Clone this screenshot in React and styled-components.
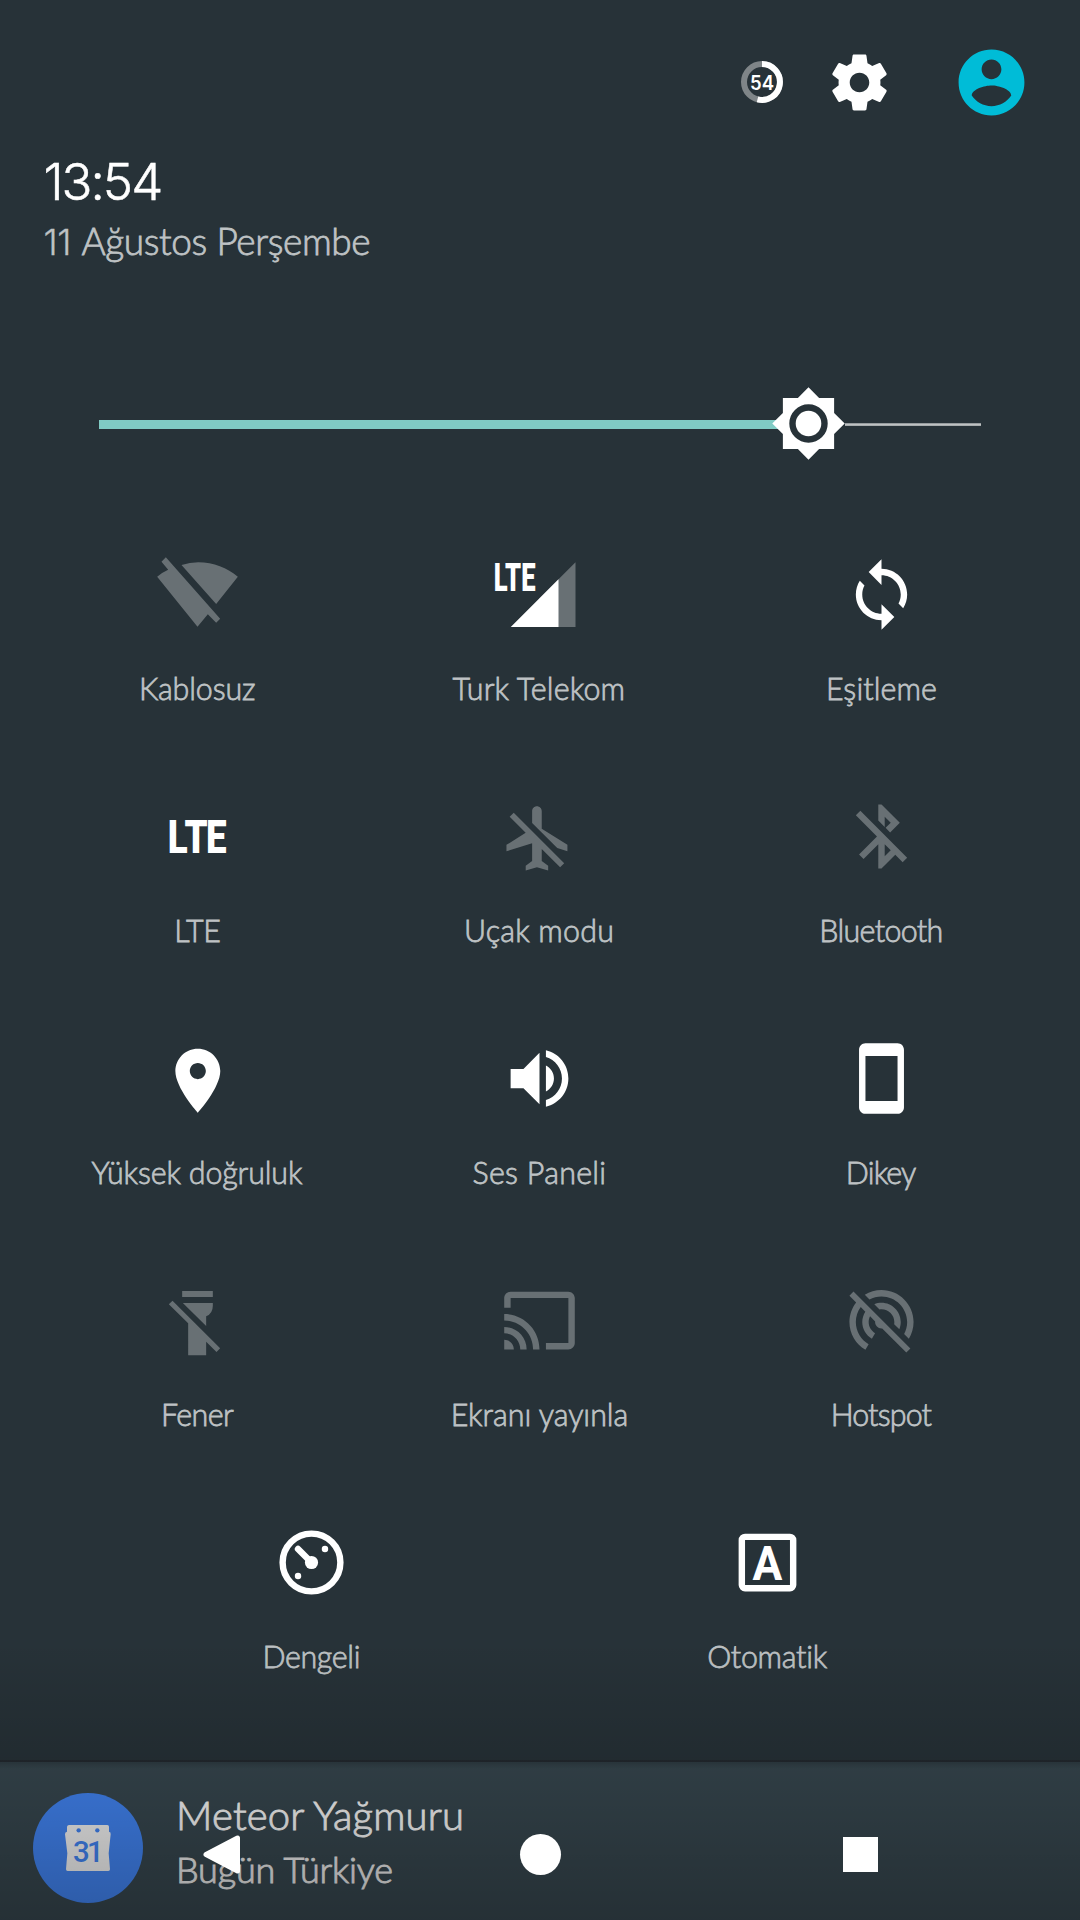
import React from "react";
import styled, { createGlobalStyle } from "styled-components";

const GlobalStyle = createGlobalStyle`
  * {
    box-sizing: border-box;
  }

  body {
    margin: 0;
    background: #273238;
  }

  svg {
    display: block;
    flex: none;
    overflow: visible;
  }
`;

const Screen = styled.div`
  position: relative;
  display: flex;
  flex-direction: column;
  width: 1080px;
  height: 1920px;
  overflow: hidden;
  background: #37474f;
  font-family: "Lato", "Noto Sans", sans-serif;
  font-weight: 300;
`;

const Panel = styled.section`
  display: flex;
  flex-direction: column;
  height: 1762px;
  background: #273238;
  border-bottom: 2px solid #23292f;
`;

const Toolbar = styled.header`
  display: flex;
  align-items: center;
  justify-content: flex-end;
  height: 150px;
  padding: 14px 49px 0 0;
`;

const SettingsButton = styled.div`
  margin: 0 59px 0 43px;
`;

const Text = styled.div`
  color: ${(p) => p.$color || "#bec2c4"};
  font-size: ${(p) => p.$size}px;
  line-height: ${(p) => p.$line}px;
  letter-spacing: ${(p) => p.$tracking || 0}px;
  -webkit-text-stroke: ${(p) => p.$stroke || 0.8}px currentColor;
  white-space: nowrap;
`;

const TileLabel = styled(Text)`
  transform: scaleX(0.95);
`;

const Time = styled(Text)`
  padding-top: 2px;
  font-family: "Inter", sans-serif;
`;

const DayNumber = styled.span`
  margin-right: 2px;
  font-family: "Inter", sans-serif;
  font-size: 36px;
  line-height: 1;
  -webkit-text-stroke-width: 0.3px;
`;

const Clock = styled.div`
  display: flex;
  flex-direction: column;
  gap: 7px;
  height: 113px;
  padding-left: 43.5px;
`;

const Slider = styled.div`
  display: flex;
  align-items: center;
  height: 75px;
  margin-top: 124px;
  padding: 0 99px;
`;

const SliderFill = styled.div`
  width: 679px;
  height: 9px;
  background: #80cbc4;
`;

const SliderRest = styled.div`
  flex: 1;
  height: 3px;
  background: linear-gradient(#747b7f, #c5c8c9 40%, #9da2a4);
`;

const SliderThumb = styled.div`
  margin: 0 0 2px -6px;
`;

const Tiles = styled.div`
  display: grid;
  grid-template-columns: repeat(${(p) => p.$columns}, 1fr);
  grid-auto-rows: 242px;
  margin-top: ${(p) => p.$top || 0}px;
  padding: 0 ${(p) => p.$inset + 2}px 0 ${(p) => p.$inset}px;
`;

const TileBox = styled.div`
  display: flex;
  flex-direction: column;
  align-items: center;
  gap: 35px;
  padding-top: 40px;
`;

const Notification = styled.section`
  display: flex;
  flex: 1;
  gap: 33px;
  padding: 28px 33px 0;
  background: linear-gradient(rgba(0, 0, 0, 0.16), rgba(0, 0, 0, 0) 7px);
`;

const AppBadge = styled.div`
  display: flex;
  align-items: center;
  justify-content: center;
  width: 110px;
  height: 110px;
  margin-top: 3px;
  border-radius: 50%;
  background: #4285f4;
`;

const NotificationText = styled.div`
  display: flex;
  flex-direction: column;
  gap: 8px;
  padding-top: 1px;
`;

const Scrim = styled.div`
  position: absolute;
  left: 0;
  right: 0;
  bottom: 0;
  height: 280px;
  background: linear-gradient(rgba(0, 0, 0, 0), rgba(0, 0, 0, 0.32));
`;

const NavBar = styled.nav`
  position: absolute;
  left: 0;
  right: 0;
  bottom: 0;
  display: grid;
  grid-template-columns: repeat(3, 1fr);
  place-items: center;
  height: 132px;
  padding: 0 60px;
`;

const BackKey = styled.div`
  padding-left: 2px;
`;

const HomeKey = styled.div`
  width: 41px;
  height: 41px;
  border-radius: 50%;
  background: #fff;
`;

const RecentsKey = styled.div`
  width: 35px;
  height: 35px;
  background: #fff;
`;

const ON = "#fff";
const OFF = "#687074";

function Icon({ d, size = 77, color = ON, box = "0 0 24 24", children }) {
  return (
    <svg width={size} height={size} viewBox={box} fill={color}>
      {d && <path d={d} />}
      {children}
    </svg>
  );
}

const paths = {
  settings:
    "M19.43 12.98c.04-.32.07-.64.07-.98s-.03-.66-.07-.98l2.11-1.65c.19-.15.24-.42.12-.64l-2-3.46c-.12-.22-.39-.3-.61-.22l-2.49 1c-.52-.4-1.08-.73-1.69-.98l-.38-2.65C14.46 2.18 14.25 2 14 2h-4c-.25 0-.46.18-.49.42l-.38 2.65c-.61.25-1.17.59-1.69.98l-2.49-1c-.23-.09-.49 0-.61.22l-2 3.46c-.13.22-.07.49.12.64l2.11 1.65c-.04.32-.07.65-.07.98s.03.66.07.98l-2.11 1.65c-.19.15-.24.42-.12.64l2 3.46c.12.22.39.3.61.22l2.49-1c.52.4 1.08.73 1.69.98l.38 2.65c.03.24.24.42.49.42h4c.25 0 .46-.18.49-.42l.38-2.65c.61-.25 1.17-.59 1.69-.98l2.49 1c.23.09.49 0 .61-.22l2-3.46c.12-.22.07-.49-.12-.64l-2.11-1.65zM12 15.5c-1.93 0-3.5-1.57-3.5-3.5s1.57-3.5 3.5-3.5 3.5 1.57 3.5 3.5-1.57 3.5-3.5 3.5z",
  account:
    "M12 2C6.48 2 2 6.48 2 12s4.48 10 10 10 10-4.48 10-10S17.52 2 12 2zm0 3c1.66 0 3 1.34 3 3s-1.34 3-3 3-3-1.34-3-3 1.34-3 3-3zm0 14.2c-2.5 0-4.71-1.28-6-3.22.03-1.99 4-3.08 6-3.08 1.99 0 5.97 1.09 6 3.08-1.29 1.94-3.5 3.22-6 3.22z",
  sync:
    "M12 4V1L8 5l4 4V6c3.31 0 6 2.69 6 6 0 1.01-.25 1.97-.7 2.8l1.46 1.46C19.54 15.03 20 13.57 20 12c0-4.42-3.58-8-8-8zm0 14c-3.31 0-6-2.69-6-6 0-1.01.25-1.97.7-2.8L5.24 7.74C4.46 8.97 4 10.43 4 12c0 4.42 3.58 8 8 8v3l4-4-4-4v3z",
  airplane:
    "M13 9V3.5c0-.83-.67-1.5-1.5-1.5S10 2.67 10 3.5v3.68l7.83 7.83L21 16v-2l-8-5zM3 5.27l4.99 4.99L2 14v2l8-2.5V19l-2 1.5V22l3.5-1 3.5 1v-1.5L13 19v-3.73L18.73 21 20 19.73 4.27 4 3 5.27z",
  bluetooth:
    "M13 5.83l1.88 1.88-1.6 1.6 1.41 1.41 3.02-3.02L12 2h-1v5.03l2 2v-3.2zM5.41 4L4 5.41 10.59 12 5 17.59 6.41 19 11 14.41V22h1l4.29-4.29 2.3 2.29L20 18.59 5.41 4zM13 18.17v-3.76l1.88 1.88L13 18.17z",
  location:
    "M12 2C8.13 2 5 5.13 5 9c0 5.25 7 13 7 13s7-7.75 7-13c0-3.87-3.13-7-7-7zm0 9.5c-1.38 0-2.5-1.12-2.5-2.5s1.12-2.5 2.5-2.5 2.5 1.12 2.5 2.5-1.12 2.5-2.5 2.5z",
  volume:
    "M3 9v6h4l5 5V4L7 9H3zm13.5 3c0-1.77-1.02-3.29-2.5-4.03v8.05c1.48-.73 2.5-2.25 2.5-4.02zM14 3.23v2.06c2.89.86 5 3.54 5 6.71s-2.11 5.85-5 6.71v2.06c4.01-.91 7-4.49 7-8.77s-2.99-7.86-7-8.77z",
  portrait:
    "M17 1.01L7 1c-1.1 0-2 .9-2 2v18c0 1.1.9 2 2 2h10c1.1 0 2-.9 2-2V3c0-1.1-.9-1.99-2-1.99zM17 19H7V5h10v14z",
  cast:
    "M21 3H3c-1.1 0-2 .9-2 2v3h2V5h18v14h-7v2h7c1.1 0 2-.9 2-2V5c0-1.1-.9-2-2-2zM1 18v3h3c0-1.66-1.34-3-3-3zm0-4v2c2.76 0 5 2.24 5 5h2c0-3.87-3.13-7-7-7zm0-4v2c4.97 0 9 4.03 9 9h2c0-6.08-4.93-11-11-11z",
  hotspot:
    "M17.56 14.24c.28-.69.44-1.45.44-2.24 0-3.31-2.69-6-6-6-.79 0-1.55.16-2.24.44l1.62 1.62c.2-.03.41-.06.62-.06 2.21 0 4 1.79 4 4 0 .21-.02.42-.05.63l1.61 1.61zM12 4c4.42 0 8 3.58 8 8 0 1.35-.35 2.62-.95 3.74l1.47 1.47C21.46 15.69 22 13.91 22 12c0-5.52-4.48-10-10-10-1.91 0-3.69.55-5.21 1.47l1.46 1.46C9.37 4.34 10.65 4 12 4zM3.27 2.5L2 3.77l2.1 2.1C2.79 7.57 2 9.69 2 12c0 3.7 2.01 6.92 4.99 8.65l1-1.73C5.61 17.53 4 14.96 4 12c0-1.76.57-3.38 1.53-4.69l1.43 1.44C6.36 9.68 6 10.8 6 12c0 2.22 1.21 4.15 3 5.19l1-1.74c-1.19-.7-2-1.97-2-3.45 0-.65.17-1.25.44-1.79l1.58 1.58L10 12c0 1.1.9 2 2 2l.21-.02.01.01 7.51 7.51L21 20.23 4.27 3.5l-1-1z",
};

function BatteryIcon() {
  return (
    <svg width="42" height="42" viewBox="0 0 42 42" fill="none">
      <circle cx="21" cy="21" r="18" stroke="#7f8588" strokeWidth="6" />
      <path d="M21 3a18 18 0 1 1-4.5 35.45" stroke="#fff" strokeWidth="6" />
      <text
        x="21"
        y="28.5"
        fill="#fff"
        fontFamily="Inter, sans-serif"
        fontSize="20"
        fontWeight="600"
        textAnchor="middle"
        textLength="24"
        lengthAdjust="spacingAndGlyphs"
      >
        54
      </text>
    </svg>
  );
}

function BrightnessIcon() {
  return (
    <svg width="73" height="73" viewBox=".6 .6 22.8 22.8" fill="#fff">
      <path d="M20 8.69V4h-4.69L12 .69 8.69 4H4v4.69L.69 12 4 15.31V20h4.69L12 23.31 15.31 20H20v-4.69L23.31 12z" />
      <circle cx="12" cy="12" r="5" fill="none" stroke="#273238" strokeWidth="2" />
    </svg>
  );
}

function WifiOffIcon() {
  return (
    <Icon
      box="115.5 48 231 231"
      color={OFF}
      d="M183 75Q208 67 233 67C280 67 320 84 352 110L287 192zM110 110Q125 97 143 89L123 65 136 52 299 236 287 248 262 223 231 260z"
    />
  );
}

function SignalIcon() {
  return (
    <Icon box="1142.5 48 231 231">
      <path d="M1366 67V261H1172z" fill={OFF} />
      <path d="M1315 118V261H1172z" />
      <text
        x="1121"
        y="154"
        fontFamily="Roboto, sans-serif"
        fontSize="117"
        fontWeight="900"
        textLength="125"
        lengthAdjust="spacingAndGlyphs"
      >
        LTE
      </text>
    </Icon>
  );
}

function LteIcon() {
  return (
    <Icon>
      <text
        transform="scale(.8 1)"
        x="3.4 9.9 18.3"
        y="17.1"
        fontFamily="Roboto, sans-serif"
        fontSize="14.3"
        fontWeight="900"
      >
        LTE
      </text>
    </Icon>
  );
}

function TorchOffIcon() {
  return (
    <Icon
      box="116.5 36 231 231"
      color={OFF}
      d="M186 63H278V81H186zM188 99H278V107Q278 130 258 139V168zM146 103L157 92 300 235 289 246 258 215V256H204V160z"
    />
  );
}

function ProfileIcon() {
  return (
    <Icon>
      <g fill="none" stroke="#fff" strokeWidth="2" strokeLinecap="round">
        <circle cx="12" cy="12" r="9" />
        <path d="M7.8 7.8L12 12" />
      </g>
      <circle cx="12" cy="12" r="2.05" />
      <circle cx="16.2" cy="7.8" r="1" />
      <circle cx="7.8" cy="16.2" r="1" />
    </Icon>
  );
}

function AutoIcon() {
  return (
    <Icon>
      <rect x="4" y="4" width="16" height="16" rx="1" fill="none" stroke="#fff" strokeWidth="2" />
      <text
        x="12"
        y="17.3"
        fontFamily="Roboto, sans-serif"
        fontSize="14.7"
        fontWeight="700"
        textAnchor="middle"
        textLength="9.3"
        lengthAdjust="spacingAndGlyphs"
      >
        A
      </text>
    </Icon>
  );
}

function CalendarIcon() {
  return (
    <svg width="46" height="46" viewBox="195 405 138 138" fill="#f5f5f5">
      <path d="M207 405H322Q327 405 327 410V425Q333 426 332 433L326 490 330 538Q330 543 325 543H203Q198 543 198 538L202 490 195 433Q195 426 201 425V410Q202 405 207 405z" />
      <g fill="#4285f4">
        <circle cx="236" cy="421" r="6.5" />
        <circle cx="292" cy="421" r="6.5" />
        <text
          x="265"
          y="516"
          fontFamily="Roboto, sans-serif"
          fontSize="88"
          fontWeight="500"
          textAnchor="middle"
          textLength="92"
        >
          31
        </text>
      </g>
    </svg>
  );
}

function Tile({ label, tracking, children }) {
  return (
    <TileBox>
      {children}
      <TileLabel $size={32} $line={40} $tracking={tracking}>
        {label}
      </TileLabel>
    </TileBox>
  );
}

export default function App() {
  return (
    <Screen>
      <GlobalStyle />
      <Panel>
        <Toolbar>
          <BatteryIcon />
          <SettingsButton>
            <Icon d={paths.settings} size={67} />
          </SettingsButton>
          <Icon d={paths.account} size={79} color="#00bcd7" />
        </Toolbar>

        <Clock>
          <Time $size={51} $line={60} $tracking={-2} $stroke={0.5} $color="#fff">
            13:54
          </Time>
          <Text $size={37} $line={44} $tracking={-0.4}>
            <DayNumber>11</DayNumber> Ağustos Perşembe
          </Text>
        </Clock>

        <Slider>
          <SliderFill />
          <SliderThumb>
            <BrightnessIcon />
          </SliderThumb>
          <SliderRest />
        </Slider>

        <Tiles $columns={3} $top={54} $inset={26}>
          <Tile label="Kablosuz" tracking={-0.15}>
            <WifiOffIcon />
          </Tile>
          <Tile label="Turk Telekom" tracking={0.2}>
            <SignalIcon />
          </Tile>
          <Tile label="Eşitleme" tracking={0.1}>
            <Icon d={paths.sync} />
          </Tile>

          <Tile label="LTE" tracking={-0.5}>
            <LteIcon />
          </Tile>
          <Tile label="Uçak modu" tracking={0.25}>
            <Icon d={paths.airplane} box=".3 -.6 24 24" color={OFF} />
          </Tile>
          <Tile label="Bluetooth" tracking={-0.7}>
            <Icon d={paths.bluetooth} color={OFF} />
          </Tile>

          <Tile label="Yüksek doğruluk" tracking={-0.15}>
            <Icon d={paths.location} box="-.1 -.7 24 24" />
          </Tile>
          <Tile label="Ses Paneli" tracking={0.3}>
            <Icon d={paths.volume} />
          </Tile>
          <Tile label="Dikey" tracking={-0.9}>
            <Icon d={paths.portrait} />
          </Tile>

          <Tile label="Fener" tracking={-0.6}>
            <TorchOffIcon />
          </Tile>
          <Tile label="Ekranı yayınla" tracking={0}>
            <Icon d={paths.cast} color={OFF} />
          </Tile>
          <Tile label="Hotspot" tracking={-0.9}>
            <Icon d={paths.hotspot} box="0 -.5 24 24" color={OFF} />
          </Tile>
        </Tiles>

        <Tiles $columns={2} $inset={83}>
          <Tile label="Dengeli" tracking={-0.4}>
            <ProfileIcon />
          </Tile>
          <Tile label="Otomatik" tracking={-0.3}>
            <AutoIcon />
          </Tile>
        </Tiles>
      </Panel>

      <Notification>
        <AppBadge>
          <CalendarIcon />
        </AppBadge>
        <NotificationText>
          <Text $size={40} $line={48} $tracking={0.2} $stroke={0.9} $color="#fbfbfb">
            Meteor Yağmuru
          </Text>
          <Text $size={36} $line={44} $tracking={-0.2} $stroke={0.9} $color="#ececec">
            Bugün Türkiye
          </Text>
        </NotificationText>
      </Notification>

      <Scrim />
      <NavBar>
        <BackKey>
          <svg width="38" height="41" viewBox="0 0 38 41" fill="#fff">
            <path
              d="M4 20.5L35.5 4V37z"
              stroke="#fff"
              strokeWidth="5"
              strokeLinejoin="round"
            />
          </svg>
        </BackKey>
        <HomeKey />
        <RecentsKey />
      </NavBar>
    </Screen>
  );
}
